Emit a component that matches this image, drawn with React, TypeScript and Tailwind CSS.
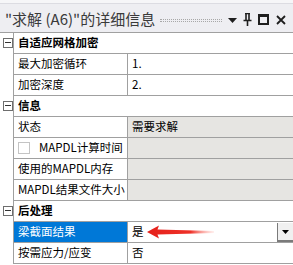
import React from "react";

const FONT = "font-['Microsoft_YaHei','Noto_Sans_CJK_SC',sans-serif]";

function MinusBox() {
  return (
    <div className="relative ml-[3px] mt-[5px] h-[10px] w-[10px] border border-[#6e6e6e] bg-white">
      <div className="absolute left-[1px] top-[3px] h-px w-[6px] bg-[#333]" />
    </div>
  );
}

function SectionHeader({ title }: { title: string }) {
  return (
    <div className="flex h-[21px]">
      <div className="w-[13px] shrink-0">
        <MinusBox />
      </div>
      <div className="flex flex-1 items-center border-b border-l border-[#a0a0a0] pl-[4px] text-[11.5px] font-bold text-black">
        {title}
      </div>
    </div>
  );
}

type RowProps = {
  label: React.ReactNode;
  value?: React.ReactNode;
  gray?: boolean;
  selected?: boolean;
  children?: React.ReactNode;
};

function Row({ label, value, gray, selected, children }: RowProps) {
  return (
    <div className="flex h-[21px]">
      <div className="w-[13px] shrink-0" />
      <div
        className={`flex w-[115px] shrink-0 items-center whitespace-nowrap border-b border-l border-r border-[#a0a0a0] pl-[4px] text-[11.5px] ${
          selected ? "bg-[#0078d7] text-white" : "bg-white text-black"
        }`}
      >
        {label}
      </div>
      <div
        className={`relative flex flex-1 items-center border-b border-[#a0a0a0] pl-[4px] text-[11.5px] text-black ${
          gray ? "bg-[#e6e5e2]" : "bg-white"
        }`}
      >
        {value}
        {children}
      </div>
    </div>
  );
}

function RedArrow() {
  return (
    <svg
      className="pointer-events-none absolute left-[19px] top-[3px]"
      width="68"
      height="14"
      viewBox="0 0 68 14"
    >
      <defs>
        <linearGradient id="fade" x1="0" x2="1" y1="0" y2="0">
          <stop offset="0" stopColor="#e5201a" />
          <stop offset="0.65" stopColor="#ee3128" />
          <stop offset="1" stopColor="#ff9a90" stopOpacity="0.15" />
        </linearGradient>
      </defs>
      <path d="M0 7 L12 0.5 L10.5 4.5 L67 6 L67 8 L10.5 9.5 L12 13.5 Z" fill="url(#fade)" />
    </svg>
  );
}

export default function App() {
  return (
    <div className={`h-[265px] w-[293px] overflow-hidden bg-white ${FONT}`}>
      <div className="flex h-[33px] flex-col border-b border-[#a0a0a0] bg-[#eeeef2]">
        <div className="h-[3px] bg-[#f6f6f8]" />
        <div className="h-px bg-[#dcdce2]" />
        <div className="flex flex-1 items-center pl-[5px] pt-[2px]">
          <span className="whitespace-nowrap text-[15px] text-[#3a3a3a]">"求解 (A6)"的详细信息</span>
          <div className="ml-[5px] mt-[2px] h-[3px] w-[62px] border-y border-dotted border-[#a8a8a8]" />
          <svg className="ml-[6px] mt-[2px]" width="9" height="5" viewBox="0 0 9 5">
            <path d="M0 0 H9 L4.5 5 Z" fill="#1e1e1e" />
          </svg>
          <svg className="ml-[6px] mt-[1px]" width="9" height="13" viewBox="0 0 9 13">
            <path d="M2 0.5 H7 M3 0.5 V7 M6 0.5 V7 M0.5 7.5 H8.5 M4.5 7.5 V13" stroke="#1e1e1e" strokeWidth="1.6" fill="none" />
          </svg>
          <div className="ml-[6px] mt-[1px] h-[11px] w-[11px] border-2 border-t-[3px] border-[#1e1e1e]" />
          <svg className="ml-[7px] mt-[1px]" width="10" height="10" viewBox="0 0 10 10">
            <path d="M1 1 L9 9 M9 1 L1 9" stroke="#1e1e1e" strokeWidth="1.8" />
          </svg>
        </div>
      </div>

      <SectionHeader title="自适应网格加密" />
      <Row label="最大加密循环" value="1." />
      <Row label="加密深度" value="2." />

      <SectionHeader title="信息" />
      <Row label="状态" value="需要求解" gray />
      <Row
        label={
          <>
            <span className="mr-[9px] h-[12px] w-[12px] border border-[#c4c4c4] bg-white" />
            MAPDL计算时间
          </>
        }
        gray
      />
      <Row label="使用的MAPDL内存" gray />
      <Row label="MAPDL结果文件大小" gray />

      <SectionHeader title="后处理" />
      <Row label="梁截面结果" value="是" selected>
        <RedArrow />
        <div className="absolute right-0 top-[1px] flex h-[19px] w-[16px] items-center justify-center border-b-2 border-l border-[#7a7a7a] bg-[#f0f0f0]">
          <svg width="7" height="4" viewBox="0 0 7 4">
            <path d="M0 0 H7 L3.5 4 Z" fill="#000" />
          </svg>
        </div>
      </Row>
      <Row label="按需应力/应变" value="否" />
    </div>
  );
}
